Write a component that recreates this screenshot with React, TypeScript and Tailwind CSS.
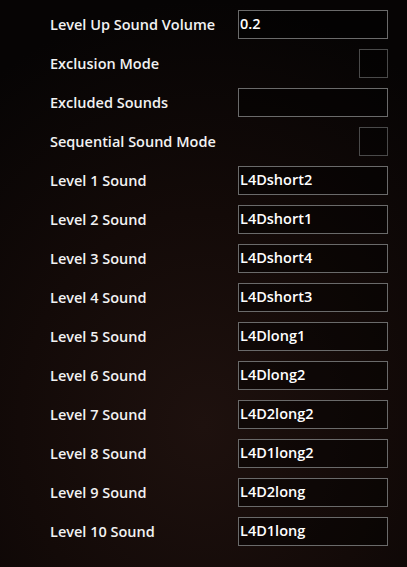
import React from 'react';

type Row =
  | { label: string; kind: 'text'; value: string }
  | { label: string; kind: 'check' };

const rows: Row[] = [
  { label: 'Level Up Sound Volume', kind: 'text', value: '0.2' },
  { label: 'Exclusion Mode', kind: 'check' },
  { label: 'Excluded Sounds', kind: 'text', value: '' },
  { label: 'Sequential Sound Mode', kind: 'check' },
  { label: 'Level 1 Sound', kind: 'text', value: 'L4Dshort2' },
  { label: 'Level 2 Sound', kind: 'text', value: 'L4Dshort1' },
  { label: 'Level 3 Sound', kind: 'text', value: 'L4Dshort4' },
  { label: 'Level 4 Sound', kind: 'text', value: 'L4Dshort3' },
  { label: 'Level 5 Sound', kind: 'text', value: 'L4Dlong1' },
  { label: 'Level 6 Sound', kind: 'text', value: 'L4Dlong2' },
  { label: 'Level 7 Sound', kind: 'text', value: 'L4D2long2' },
  { label: 'Level 8 Sound', kind: 'text', value: 'L4D1long2' },
  { label: 'Level 9 Sound', kind: 'text', value: 'L4D2long' },
  { label: 'Level 10 Sound', kind: 'text', value: 'L4D1long' },
];

export default function App() {
  return (
    <div className="w-[407px] h-[567px] overflow-hidden bg-[#060404] bg-[radial-gradient(ellipse_90%_75%_at_50%_75%,#1e110e_0%,#130a08_50%,#060404_100%)] font-['Open_Sans','Noto_Sans',sans-serif] text-[14.5px] font-semibold text-[#f2f2f2]">
      <div className="flex flex-col gap-[11px] pt-[10px] pl-[50px] pr-[19px]">
        {rows.map((r) => (
          <div key={r.label} className="flex h-[28px] items-center justify-between">
            <span className="pt-[2px] leading-none">{r.label}</span>
            {r.kind === 'text' ? (
              <div className="flex h-[29px] w-[150px] items-center border border-[#6a6a6a] bg-black/40 pl-[1px] pt-[1px] leading-none text-white">
                {r.value}
              </div>
            ) : (
              <div className="h-[29px] w-[29px] border border-[#4a4a4a] bg-black/30" />
            )}
          </div>
        ))}
      </div>
    </div>
  );
}
